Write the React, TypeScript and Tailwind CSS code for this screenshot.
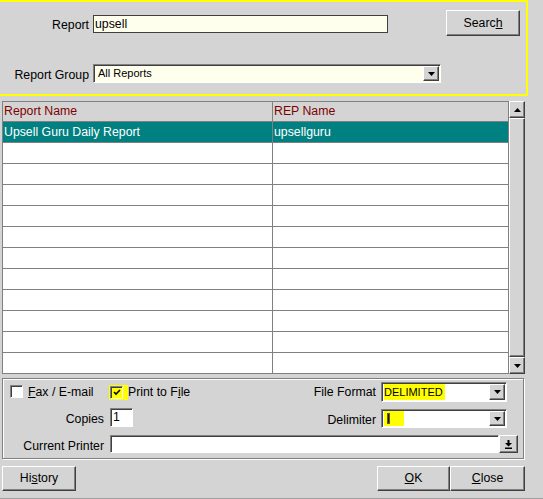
import React from 'react';

// Win-classic bevels
const raised =
  'border border-t-white border-l-white border-r-[#404040] border-b-[#404040] shadow-[inset_-1px_-1px_0_#808080] bg-[#d4d4d4]';
const sunken =
  'border border-t-[#808080] border-l-[#808080] border-r-white border-b-white shadow-[inset_1px_1px_0_#404040]';

function DownTri() {
  return (
    <svg width="7" height="4" viewBox="0 0 7 4" aria-hidden="true">
      <path d="M0 0h7L3.5 4z" fill="#000" />
    </svg>
  );
}

function UpTri() {
  return (
    <svg width="7" height="4" viewBox="0 0 7 4" aria-hidden="true">
      <path d="M0 4h7L3.5 0z" fill="#000" />
    </svg>
  );
}

function DropBtn() {
  return (
    <div className={`${raised} flex h-full w-[16px] items-center justify-center`}>
      <DownTri />
    </div>
  );
}

function Select({ w, h, children }: { w: string; h: string; children?: React.ReactNode }) {
  return (
    <div className={`${sunken} ${w} ${h} flex items-stretch bg-white p-[1px] pl-[2px]`}>
      <div className="flex flex-1 items-center overflow-hidden whitespace-nowrap">{children}</div>
      <DropBtn />
    </div>
  );
}

function Check({ checked = false }: { checked?: boolean }) {
  return (
    <div className={`${sunken} flex h-[13px] w-[13px] items-center justify-center ${checked ? 'bg-transparent' : 'bg-white'}`}>
      {checked && (
        <svg width="8" height="7" viewBox="0 0 8 7" aria-hidden="true">
          <path d="M1 3l2 2 4-4" stroke="#000" strokeWidth="1.6" fill="none" />
        </svg>
      )}
    </div>
  );
}

export default function App() {
  const rows = Array.from({ length: 12 }, (_, i) =>
    i === 0 ? { name: 'Upsell Guru Daily Report', rep: 'upsellguru' } : { name: '', rep: '' },
  );

  return (
    <div
      className="h-[499px] w-[543px] overflow-hidden bg-[#d4d4d4] text-[12.3px] leading-none text-black"
      style={{ fontFamily: '"Liberation Sans", Arial, sans-serif' }}
    >
      {/* search box */}
      <div className="box-border h-[96px] w-[528px] border-2 border-l-0 border-[#ffff00]">
        <div className="flex items-start">
          <div className="mt-[13px] flex h-[18px] w-[89px] items-center justify-end pt-[3px]">Report</div>
          <div className="ml-[4px] mt-[13px] flex h-[18px] w-[295px] items-center border border-[#404040] bg-[#ffffee] px-[1px]">
            upsell
          </div>
          <button className={`${raised} ml-[58px] mt-[8px] h-[26px] w-[74px]`}>
            Searc<span className="underline">h</span>
          </button>
        </div>
        <div className="mt-[28px] flex items-center">
          <div className="w-[89px] pt-[3px] text-right">Report Group</div>
          <div className={`${sunken} ml-[4px] flex h-[19px] w-[348px] items-stretch bg-[#ffffee] p-[1px] pl-[4px]`}>
            <div className="flex flex-1 items-center text-[11px]">All Reports</div>
            <DropBtn />
          </div>
        </div>
      </div>

      <div className="px-[2px]">
        {/* grid + scrollbar */}
        <div className="mt-[5px] flex h-[273px]">
          <div className="w-[507px] border border-[#808080] border-b-0 bg-white">
            <div className="flex h-[20px] border-b border-[#808080] bg-[#d4d4d4] text-[#800000]">
              <div className="flex w-[270px] items-center border-r border-[#808080] pl-[1px]">Report Name</div>
              <div className="flex flex-1 items-center pl-[1px]">REP Name</div>
            </div>
            {rows.map((r, i) => (
              <div
                key={i}
                className={`flex h-[21px] border-b border-[#808080] ${i === 0 ? 'bg-[#008080] text-white' : ''}`}
              >
                <div className="flex w-[270px] items-center border-r border-[#808080] pl-[1px]">{r.name}</div>
                <div className="flex flex-1 items-center pl-[1px]">{r.rep}</div>
              </div>
            ))}
          </div>
          <div className="flex w-[16px] flex-col">
            <div className={`${raised} flex h-[17px] items-center justify-center`}>
              <UpTri />
            </div>
            <div className={`${raised} flex-1`} />
            <div className={`${raised} flex h-[17px] items-center justify-center`}>
              <DownTri />
            </div>
          </div>
        </div>

        {/* print options */}
        <div className="mt-[4px] box-border h-[81px] w-[522px] border border-[#808080] shadow-[inset_1px_1px_0_#fff,1px_1px_0_#fff]">
          <div className="mt-[3px] flex h-[20px] items-center">
            <div className="flex w-[106px] items-center">
              <div className="ml-[7px]">
                <Check />
              </div>
              <span className="ml-[5px] pt-[1px]">
                <span className="underline">F</span>ax / E-mail
              </span>
            </div>
            <div className="flex w-[160px] items-center">
              <div className="flex h-[15px] w-[19px] items-center bg-[#ffff00] pl-[1px]">
                <Check checked />
              </div>
              <span className="pt-[1px]">
                Print to F<span className="underline">i</span>le
              </span>
            </div>
            <div className="w-[107px] pt-[1px] text-right">File Format</div>
            <div className="ml-[5px]">
              <Select w="w-[126px]" h="h-[20px]">
                <span className="bg-[#ffff00] py-[3px] pr-[2px] text-[11px]">DELIMITED</span>
              </Select>
            </div>
          </div>

          <div className="mt-[6px] flex items-start">
            <div className="flex h-[19px] w-[101px] items-center justify-end pt-[3px]">Copies</div>
            <div className={`${sunken} ml-[6px] flex h-[19px] w-[23px] items-center bg-white pl-[2px]`}>1</div>
            <div className="mt-[1px] flex h-[19px] w-[243px] items-center justify-end pt-[3px]">Delimiter</div>
            <div className="ml-[5px] mt-[1px]">
              <Select w="w-[126px]" h="h-[19px]">
                <span className="flex h-[15px] w-[20px] items-center bg-[#ffff00] pl-[3px]">
                  <span className="h-[11px] w-[3px] border border-[#606000] bg-[#202000]" />
                </span>
              </Select>
            </div>
          </div>

          <div className="mt-[7px] flex items-center">
            <div className="w-[101px] pt-[4px] text-right">Current Printer</div>
            <div className={`${sunken} ml-[6px] h-[18px] w-[389px] bg-white`} />
            <div className={`${raised} flex h-[18px] w-[19px] items-center justify-center`}>
              <svg width="7" height="9" viewBox="0 0 7 9" aria-hidden="true">
                <path d="M2.5 0h2v3h2.5L3.5 6.5 0 3h2.5z" fill="#000" />
                <rect x="0" y="7.5" width="7" height="1.5" fill="#000" />
              </svg>
            </div>
          </div>
        </div>

        {/* buttons */}
        <div className="mt-[7px] flex">
          <button className={`${raised} h-[25px] w-[74px]`}>
            Hi<span className="underline">s</span>tory
          </button>
          <button className={`${raised} ml-auto h-[25px] w-[73px]`}>
            <span className="underline">O</span>K
          </button>
          <button className={`${raised} mr-[16px] h-[25px] w-[75px]`}>
            <span className="underline">C</span>lose
          </button>
        </div>
      </div>
      <div className="mt-[7px] border-t-2 border-[#a0a0a0]" />
    </div>
  );
}
